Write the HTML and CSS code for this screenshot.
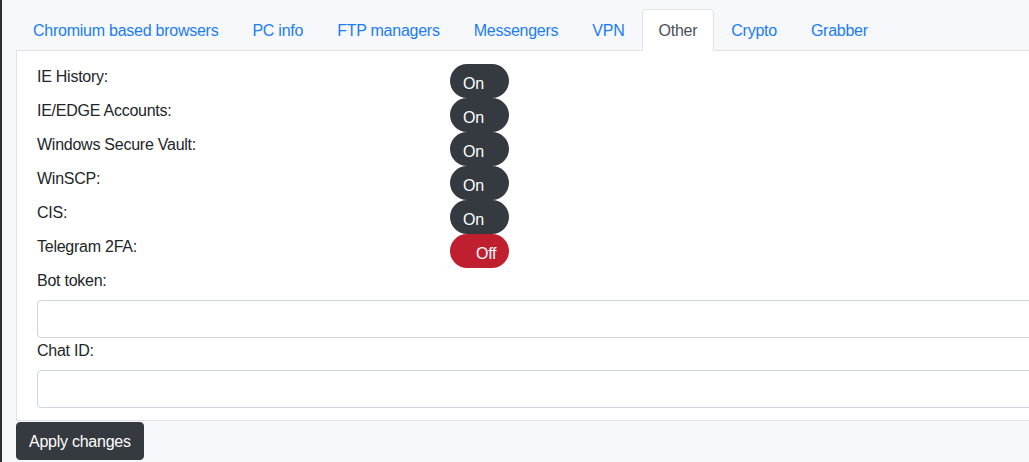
FILE: index.html
```html
<!DOCTYPE html>
<html>
<head>
<meta charset="utf-8">
<link rel="stylesheet" href="styles.css">
</head>
<body>
<div class="page">
  <ul class="tabs">
    <li class="tab">Chromium based browsers</li>
    <li class="tab">PC info</li>
    <li class="tab">FTP managers</li>
    <li class="tab">Messengers</li>
    <li class="tab">VPN</li>
    <li class="tab active">Other</li>
    <li class="tab">Crypto</li>
    <li class="tab">Grabber</li>
  </ul>
  <div class="card">
    <div class="toggles">
      <div class="label">IE History:</div><div class="pill on">On</div>
      <div class="label">IE/EDGE Accounts:</div><div class="pill on">On</div>
      <div class="label">Windows Secure Vault:</div><div class="pill on">On</div>
      <div class="label">WinSCP:</div><div class="pill on">On</div>
      <div class="label">CIS:</div><div class="pill on">On</div>
      <div class="label">Telegram 2FA:</div><div class="pill off">Off</div>
    </div>
    <div class="field">
      <label class="flabel">Bot token:</label>
      <input class="input" type="text">
    </div>
    <div class="field">
      <label class="flabel">Chat ID:</label>
      <input class="input" type="text">
    </div>
  </div>
  <button class="apply">Apply changes</button>
</div>
</body>
</html>
```
FILE: styles.css
```css
html, body {
  margin: 0;
  padding: 0;
  overflow: hidden;
}
body {
  background: #f7f8fc;
  font-family: "Liberation Sans", Arial, sans-serif;
  font-size: 16px;
  line-height: 24px;
  letter-spacing: -0.25px;
  color: #212529;
  border-left: 2px solid #2c2f34;
  height: 462px;
  box-sizing: border-box;
}
.page {
  width: 1100px;
  padding: 9px 0 0 14px;
}
.tabs {
  list-style: none;
  margin: 0;
  padding: 0;
  display: flex;
  border-bottom: 1px solid #dee2e6;
}
.tab {
  padding: 9px 16px 7px;
  border: 1px solid transparent;
  border-top-left-radius: 4px;
  border-top-right-radius: 4px;
  margin-bottom: -1px;
  color: #1a7cf5;
}
.tab.active {
  background: #fff;
  color: #495057;
  border-color: #dee2e6 #dee2e6 #fff;
}
.card {
  background: #fff;
  border: 1px solid #dee2e6;
  border-top: none;
  padding: 13px 20px 12px 20px;
}
.toggles {
  display: grid;
  grid-template-columns: 413px 59px;
  grid-auto-rows: 34px;
}
.label {
  line-height: 24px;
  padding-top: 1px;
}
.pill {
  height: 34px;
  border-radius: 17px;
  color: #fff;
  box-sizing: border-box;
  padding-top: 8px;
  line-height: 24px;
}
.pill.on {
  background: #343a40;
  padding-left: 13px;
}
.pill.off {
  background: #c01f30;
  padding-left: 26px;
}
.field {
  display: flex;
  flex-direction: column;
}
.flabel {
  margin-bottom: 7px;
  padding-top: 1px;
}
.input {
  height: 38px;
  box-sizing: border-box;
  border: 1px solid #ced4da;
  border-radius: 4px;
  background: #fff;
  font: inherit;
  padding: 6px 12px;
}
.apply {
  font: inherit;
  letter-spacing: inherit;
  background: #343a40;
  color: #fff;
  border: 1px solid #343a40;
  border-radius: 4px;
  padding: 7px 12px 5px;
  line-height: 24px;
  margin-top: 1px;
}
```
